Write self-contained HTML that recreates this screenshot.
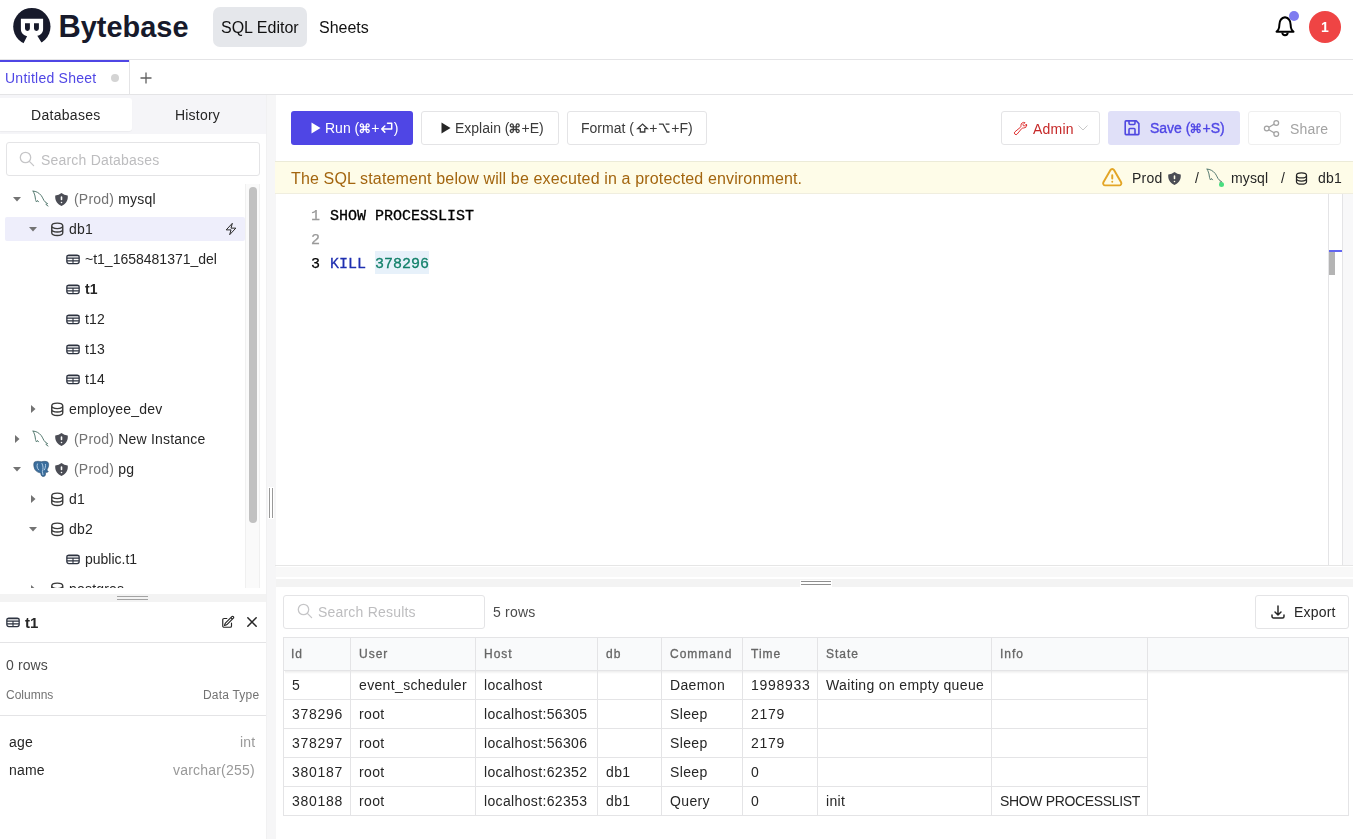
<!DOCTYPE html>
<html><head><meta charset="utf-8">
<style>
*{box-sizing:border-box;margin:0;padding:0}
html,body{width:1353px;height:839px;overflow:hidden;background:#fff;font-family:"Liberation Sans",sans-serif;color:#111827}
.a{position:absolute}
.t{position:absolute;white-space:nowrap;line-height:1;will-change:transform}
svg{position:absolute;overflow:visible}
svg.g{position:static;display:inline-block;vertical-align:baseline}
</style></head><body>
<div class="a" style="left:0px;top:59px;width:1353px;height:1px;background:#e4e4e6"></div>
<svg style="left:0;top:0" width="60" height="50" viewBox="0 0 60 50"><circle cx="31.85" cy="26.6" r="18.65" fill="#171a2b"/><path d="M20.9 18.8 H43.1 V29.2 C43.1 32.4 40.8 35 37.3 35.7 L44.2 47 H21.6 L27.1 36.2 C23.4 35.3 20.9 32.6 20.9 29.2 Z" fill="#fff"/><path d="M25 23.2 H29.9 V28.45 A2.45 2.45 0 0 1 25 28.45 Z M34 23.2 H38.9 V28.45 A2.45 2.45 0 0 1 34 28.45 Z" fill="#171a2b"/></svg>
<svg style="left:58px;top:8px" width="132" height="38" viewBox="0 0 132 38"><text x="0.5" y="28.5" font-family="Liberation Sans" font-weight="bold" font-size="30" fill="#171a2b" textLength="130" lengthAdjust="spacingAndGlyphs"><tspan font-size="32">B</tspan>ytebase</text></svg>
<div class="a" style="left:213px;top:7px;width:94px;height:40px;background:#e5e7eb;border-radius:7px"></div>
<div class="t" style="top:20.06px;font-size:16px;color:#111;left:221px;">SQL Editor</div>
<div class="t" style="top:20.06px;font-size:16px;color:#111;left:319px;">Sheets</div>
<svg style="left:1270px;top:10px;" width="30" height="30" viewBox="0 0 30 30"><path d="M15 7.2 C12.3 7.6 9.6 10 9.4 14.5 L9.1 17.5 C8.9 19.5 7.9 20.5 6.5 21.7 H23.5 C22.1 20.5 21.1 19.5 20.9 17.5 L20.6 14.5 C20.4 10 17.7 7.6 15 7.2 Z" fill="none" stroke="#000" stroke-width="2" stroke-linejoin="round"/><path d="M12.3 22.6 A2.7 2.7 0 0 0 17.7 22.6" fill="none" stroke="#000" stroke-width="2"/></svg>
<div class="a" style="left:1289px;top:11px;width:10px;height:10px;background:#7f7cf0;border-radius:50%"></div>
<div class="a" style="left:1309px;top:11px;width:32px;height:32px;background:#ef4444;border-radius:50%"></div>
<div class="t" style="top:20.15px;font-size:14px;color:#fff;left:1325px;font-weight:bold;transform:translateX(-50%)">1</div>
<div class="a" style="left:0px;top:94px;width:1353px;height:1px;background:#e4e4e6"></div>
<div class="a" style="left:0px;top:60px;width:129px;height:2px;background:#4f46e5"></div>
<div class="a" style="left:129px;top:60px;width:1px;height:34px;background:#e4e4e6"></div>
<div class="t" style="top:71.05px;font-size:14px;color:#4f46e5;left:5px;letter-spacing:.25px">Untitled Sheet</div>
<div class="a" style="left:111px;top:74px;width:8px;height:8px;background:#d4d4d4;border-radius:50%"></div>
<svg style="left:140px;top:71.5px;" width="12" height="12" viewBox="0 0 12 12"><path d="M6 0.5V11.5M0.5 6H11.5" stroke="#606060" stroke-width="1.3"/></svg>
<div class="a" style="left:0px;top:95px;width:266px;height:39px;background:#f5f5f8"></div>
<div class="a" style="left:0px;top:98px;width:132px;height:33px;background:#fff;border-radius:0 3px 3px 0;box-shadow:0 1px 1px rgba(0,0,0,.04)"></div>
<div class="t" style="top:108.15px;font-size:14px;color:#262626;left:31px;letter-spacing:.3px">Databases</div>
<div class="t" style="top:108.15px;font-size:14px;color:#262626;left:175px;letter-spacing:.2px">History</div>
<div class="a" style="left:6px;top:142px;width:254px;height:34px;border:1px solid #e4e4e6;border-radius:3px"></div>
<svg style="left:19px;top:151px;" width="16" height="16" viewBox="0 0 16 16"><circle cx="6.5" cy="6.5" r="5.2" fill="none" stroke="#c6c6c8" stroke-width="1.3"/><path d="M10.4 10.4L14.6 14.6" stroke="#c6c6c8" stroke-width="1.3" stroke-linecap="round"/></svg>
<div class="t" style="top:153.15px;font-size:14px;color:#bdbdbf;left:41px;letter-spacing:.2px">Search Databases</div>
<div class="a" style="left:5px;top:217px;width:240px;height:24px;background:#eeeefb;border-radius:2px"></div>
<svg style="left:13px;top:197px;" width="8" height="5" viewBox="0 0 8 5"><path d="M0 0H8L4 4.5Z" fill="#737373"/></svg>
<svg style="left:33px;top:191px;" width="16" height="16" viewBox="0 0 16 16"><path d="M0.1 0.1 C3 0.1 6 1.8 8.2 4.5 C9.7 6.5 10.6 9.4 12 10.8 C12.9 11.6 14 12 14.6 12.6 L12.8 13.3 L15 15" fill="none" stroke="#557a70" stroke-width="1" stroke-linecap="round" stroke-linejoin="round"/><path d="M0.1 0.1 C1 2 2 4 2.3 7 C2.5 9 3 10 3.5 11 L4.5 9.5 L5.5 10.8" fill="none" stroke="#557a70" stroke-width="1" stroke-linecap="round" stroke-linejoin="round"/></svg>
<svg style="left:55px;top:192.5px;" width="13" height="13" viewBox="2 1.9 16 16.5"><path fill-rule="evenodd" d="M10 1.944A11.954 11.954 0 012.166 5C2.056 5.649 2 6.319 2 7c0 5.225 3.34 9.67 8 11.317C14.66 16.67 18 12.225 18 7c0-.682-.057-1.35-.166-2.001A11.954 11.954 0 0110 1.944zM11 14a1 1 0 11-2 0 1 1 0 012 0zm0-7a1 1 0 10-2 0v3a1 1 0 102 0V7z" fill="#4b4d55"/></svg>
<div class="t" style="top:191.75px;font-size:14px;color:#262626;left:74px;letter-spacing:.2px"><span style="color:#737373">(Prod)</span> mysql</div>
<svg style="left:29px;top:227px;" width="8" height="5" viewBox="0 0 8 5"><path d="M0 0H8L4 4.5Z" fill="#737373"/></svg>
<svg style="left:48.9px;top:220.75px;" width="16.5" height="16.5" viewBox="0 0 24 24"><path d="M4 7v10c0 2.21 3.582 4 8 4s8-1.79 8-4V7M4 7c0 2.21 3.582 4 8 4s8-1.79 8-4M4 7c0-2.21 3.582-4 8-4s8 1.79 8 4m0 5c0 2.21-3.582 4-8 4s-8-1.79-8-4" fill="none" stroke="#3a3a3a" stroke-width="2" stroke-linecap="round" stroke-linejoin="round"/></svg>
<div class="t" style="top:221.75px;font-size:14px;color:#262626;left:69px;letter-spacing:.2px">db1</div>
<svg style="left:66px;top:253.5px;" width="14" height="11" viewBox="0 0 14 11"><rect x="0.85" y="1.05" width="12.3" height="8.5" rx="2" fill="none" stroke="#2d3340" stroke-width="1.3"/><path d="M0.85 1.6H13.15M0.85 4.1H13.15M0.85 6.85H13.15M7 4.1V9.5" stroke="#2d3340" stroke-width="1.1"/></svg>
<div class="t" style="top:251.75px;font-size:14px;color:#262626;left:85.3px;letter-spacing:0px">~t1_1658481371_del</div>
<svg style="left:66px;top:283.5px;" width="14" height="11" viewBox="0 0 14 11"><rect x="0.85" y="1.05" width="12.3" height="8.5" rx="2" fill="none" stroke="#2d3340" stroke-width="1.3"/><path d="M0.85 1.6H13.15M0.85 4.1H13.15M0.85 6.85H13.15M7 4.1V9.5" stroke="#2d3340" stroke-width="1.1"/></svg>
<div class="t" style="top:281.75px;font-size:14px;color:#262626;left:85.3px;font-weight:bold;letter-spacing:.2px">t1</div>
<svg style="left:66px;top:313.5px;" width="14" height="11" viewBox="0 0 14 11"><rect x="0.85" y="1.05" width="12.3" height="8.5" rx="2" fill="none" stroke="#2d3340" stroke-width="1.3"/><path d="M0.85 1.6H13.15M0.85 4.1H13.15M0.85 6.85H13.15M7 4.1V9.5" stroke="#2d3340" stroke-width="1.1"/></svg>
<div class="t" style="top:311.75px;font-size:14px;color:#262626;left:85.3px;letter-spacing:.2px">t12</div>
<svg style="left:66px;top:343.5px;" width="14" height="11" viewBox="0 0 14 11"><rect x="0.85" y="1.05" width="12.3" height="8.5" rx="2" fill="none" stroke="#2d3340" stroke-width="1.3"/><path d="M0.85 1.6H13.15M0.85 4.1H13.15M0.85 6.85H13.15M7 4.1V9.5" stroke="#2d3340" stroke-width="1.1"/></svg>
<div class="t" style="top:341.75px;font-size:14px;color:#262626;left:85.3px;letter-spacing:.2px">t13</div>
<svg style="left:66px;top:373.5px;" width="14" height="11" viewBox="0 0 14 11"><rect x="0.85" y="1.05" width="12.3" height="8.5" rx="2" fill="none" stroke="#2d3340" stroke-width="1.3"/><path d="M0.85 1.6H13.15M0.85 4.1H13.15M0.85 6.85H13.15M7 4.1V9.5" stroke="#2d3340" stroke-width="1.1"/></svg>
<div class="t" style="top:371.75px;font-size:14px;color:#262626;left:85.3px;letter-spacing:.2px">t14</div>
<svg style="left:31px;top:405px;" width="5" height="8" viewBox="0 0 5 8"><path d="M0 0V8L4.5 4Z" fill="#737373"/></svg>
<svg style="left:48.9px;top:400.75px;" width="16.5" height="16.5" viewBox="0 0 24 24"><path d="M4 7v10c0 2.21 3.582 4 8 4s8-1.79 8-4V7M4 7c0 2.21 3.582 4 8 4s8-1.79 8-4M4 7c0-2.21 3.582-4 8-4s8 1.79 8 4m0 5c0 2.21-3.582 4-8 4s-8-1.79-8-4" fill="none" stroke="#3a3a3a" stroke-width="2" stroke-linecap="round" stroke-linejoin="round"/></svg>
<div class="t" style="top:401.75px;font-size:14px;color:#262626;left:69px;letter-spacing:.2px">employee_dev</div>
<svg style="left:15px;top:435px;" width="5" height="8" viewBox="0 0 5 8"><path d="M0 0V8L4.5 4Z" fill="#737373"/></svg>
<svg style="left:33px;top:431px;" width="16" height="16" viewBox="0 0 16 16"><path d="M0.1 0.1 C3 0.1 6 1.8 8.2 4.5 C9.7 6.5 10.6 9.4 12 10.8 C12.9 11.6 14 12 14.6 12.6 L12.8 13.3 L15 15" fill="none" stroke="#557a70" stroke-width="1" stroke-linecap="round" stroke-linejoin="round"/><path d="M0.1 0.1 C1 2 2 4 2.3 7 C2.5 9 3 10 3.5 11 L4.5 9.5 L5.5 10.8" fill="none" stroke="#557a70" stroke-width="1" stroke-linecap="round" stroke-linejoin="round"/></svg>
<svg style="left:55px;top:432.5px;" width="13" height="13" viewBox="2 1.9 16 16.5"><path fill-rule="evenodd" d="M10 1.944A11.954 11.954 0 012.166 5C2.056 5.649 2 6.319 2 7c0 5.225 3.34 9.67 8 11.317C14.66 16.67 18 12.225 18 7c0-.682-.057-1.35-.166-2.001A11.954 11.954 0 0110 1.944zM11 14a1 1 0 11-2 0 1 1 0 012 0zm0-7a1 1 0 10-2 0v3a1 1 0 102 0V7z" fill="#4b4d55"/></svg>
<div class="t" style="top:431.75px;font-size:14px;color:#262626;left:74px;letter-spacing:.2px"><span style="color:#737373">(Prod)</span> New Instance</div>
<svg style="left:13px;top:467px;" width="8" height="5" viewBox="0 0 8 5"><path d="M0 0H8L4 4.5Z" fill="#737373"/></svg>
<svg style="left:33px;top:461px;" width="16" height="16" viewBox="0 0 16 16"><path d="M1.6 0.9 C4 0 6.5 0.3 8.2 0.8 C10.2 0.2 13.6 0 15.1 1.4 C16.2 2.7 15.7 5.6 14.4 8.1 C13.9 9.1 13.9 9.9 15.3 10.4 C14.8 11.4 13.4 11.7 12.7 11 L12.4 14 C12.2 15.3 10.5 15.8 9.2 15.3 C8.1 14.8 7.8 13.2 7.8 11.9 C5.6 11.7 3.2 10.6 2 8.6 C0.7 6.1 0.2 2.2 1.6 0.9 Z" fill="#3a6d9c" stroke="#2f4f6f" stroke-width="0.6"/><path d="M4.6 2.6 C3.6 4.8 4 7.4 6 9.2 M8.8 2.2 C10.2 4.5 10.4 7.8 9.4 10.6 L10 14 M12.4 3 C12.8 5.2 12.2 7.4 11.2 9.2" fill="none" stroke="#bcd6ec" stroke-width="0.9"/></svg>
<svg style="left:55px;top:462.5px;" width="13" height="13" viewBox="2 1.9 16 16.5"><path fill-rule="evenodd" d="M10 1.944A11.954 11.954 0 012.166 5C2.056 5.649 2 6.319 2 7c0 5.225 3.34 9.67 8 11.317C14.66 16.67 18 12.225 18 7c0-.682-.057-1.35-.166-2.001A11.954 11.954 0 0110 1.944zM11 14a1 1 0 11-2 0 1 1 0 012 0zm0-7a1 1 0 10-2 0v3a1 1 0 102 0V7z" fill="#4b4d55"/></svg>
<div class="t" style="top:461.75px;font-size:14px;color:#262626;left:74px;letter-spacing:.2px"><span style="color:#737373">(Prod)</span> pg</div>
<svg style="left:31px;top:495px;" width="5" height="8" viewBox="0 0 5 8"><path d="M0 0V8L4.5 4Z" fill="#737373"/></svg>
<svg style="left:48.9px;top:490.75px;" width="16.5" height="16.5" viewBox="0 0 24 24"><path d="M4 7v10c0 2.21 3.582 4 8 4s8-1.79 8-4V7M4 7c0 2.21 3.582 4 8 4s8-1.79 8-4M4 7c0-2.21 3.582-4 8-4s8 1.79 8 4m0 5c0 2.21-3.582 4-8 4s-8-1.79-8-4" fill="none" stroke="#3a3a3a" stroke-width="2" stroke-linecap="round" stroke-linejoin="round"/></svg>
<div class="t" style="top:491.75px;font-size:14px;color:#262626;left:69px;letter-spacing:.2px">d1</div>
<svg style="left:29px;top:527px;" width="8" height="5" viewBox="0 0 8 5"><path d="M0 0H8L4 4.5Z" fill="#737373"/></svg>
<svg style="left:48.9px;top:520.75px;" width="16.5" height="16.5" viewBox="0 0 24 24"><path d="M4 7v10c0 2.21 3.582 4 8 4s8-1.79 8-4V7M4 7c0 2.21 3.582 4 8 4s8-1.79 8-4M4 7c0-2.21 3.582-4 8-4s8 1.79 8 4m0 5c0 2.21-3.582 4-8 4s-8-1.79-8-4" fill="none" stroke="#3a3a3a" stroke-width="2" stroke-linecap="round" stroke-linejoin="round"/></svg>
<div class="t" style="top:521.75px;font-size:14px;color:#262626;left:69px;letter-spacing:.2px">db2</div>
<svg style="left:66px;top:553.5px;" width="14" height="11" viewBox="0 0 14 11"><rect x="0.85" y="1.05" width="12.3" height="8.5" rx="2" fill="none" stroke="#2d3340" stroke-width="1.3"/><path d="M0.85 1.6H13.15M0.85 4.1H13.15M0.85 6.85H13.15M7 4.1V9.5" stroke="#2d3340" stroke-width="1.1"/></svg>
<div class="t" style="top:551.75px;font-size:14px;color:#262626;left:85.3px;letter-spacing:0px">public.t1</div>
<svg style="left:31px;top:585px;" width="5" height="8" viewBox="0 0 5 8"><path d="M0 0V8L4.5 4Z" fill="#737373"/></svg>
<svg style="left:48.9px;top:580.75px;" width="16.5" height="16.5" viewBox="0 0 24 24"><path d="M4 7v10c0 2.21 3.582 4 8 4s8-1.79 8-4V7M4 7c0 2.21 3.582 4 8 4s8-1.79 8-4M4 7c0-2.21 3.582-4 8-4s8 1.79 8 4m0 5c0 2.21-3.582 4-8 4s-8-1.79-8-4" fill="none" stroke="#3a3a3a" stroke-width="2" stroke-linecap="round" stroke-linejoin="round"/></svg>
<div class="t" style="top:581.75px;font-size:14px;color:#262626;left:69px;letter-spacing:.2px">postgres</div>
<svg style="left:224px;top:222px;" width="14" height="14" viewBox="0 0 24 24"><path d="M3.75 13.5l10.5-11.25L12 10.5h8.25L9.75 21.75 12 13.5H3.75z" fill="none" stroke="#262626" stroke-width="1.7" stroke-linejoin="round"/></svg>
<div class="a" style="left:245px;top:184px;width:15px;height:406px;border-left:1px solid #f0f0f0;border-right:1px solid #f0f0f0;background:#fafafa"></div>
<div class="a" style="left:249px;top:187px;width:8px;height:336px;background:#c1c1c1;border-radius:4px"></div>
<div class="a" style="left:0px;top:588px;width:267px;height:251px;background:#fff"></div>
<div class="a" style="left:0px;top:594px;width:266px;height:8px;background:#f3f3f3"></div>
<div class="a" style="left:117px;top:596px;width:31px;height:1px;background:#a3a3a3"></div>
<div class="a" style="left:117px;top:599px;width:31px;height:1px;background:#a3a3a3"></div>
<div class="a" style="left:0px;top:642px;width:267px;height:1px;background:#e4e4e6"></div>
<svg style="left:6px;top:616.5px;" width="14" height="11" viewBox="0 0 14 11"><rect x="0.85" y="1.05" width="12.3" height="8.5" rx="2" fill="none" stroke="#2d3340" stroke-width="1.3"/><path d="M0.85 1.6H13.15M0.85 4.1H13.15M0.85 6.85H13.15M7 4.1V9.5" stroke="#2d3340" stroke-width="1.1"/></svg>
<div class="t" style="top:614.90px;font-size:15px;color:#262626;left:25px;font-weight:bold;">t1</div>
<svg style="left:221px;top:615px;" width="14" height="14" viewBox="0 0 24 24"><path d="M16.862 4.487l1.687-1.688a1.875 1.875 0 112.652 2.652L10.582 16.07a4.5 4.5 0 01-1.897 1.13L6 18l.8-2.685a4.5 4.5 0 011.13-1.897l8.932-8.931zm0 0L19.5 7.125M18 14v4.75A2.25 2.25 0 0115.75 21H5.25A2.25 2.25 0 013 18.75V8.25A2.25 2.25 0 015.25 6H10" fill="none" stroke="#262626" stroke-width="2" stroke-linecap="round" stroke-linejoin="round"/></svg>
<svg style="left:247px;top:617px;" width="10" height="10" viewBox="0 0 10 10"><path d="M0.8 0.8L9.2 9.2M9.2 0.8L0.8 9.2" stroke="#262626" stroke-width="1.5" stroke-linecap="round"/></svg>
<div class="t" style="top:657.95px;font-size:14px;color:#4b4b4b;left:6px;letter-spacing:.1px">0 rows</div>
<div class="t" style="top:689.04px;font-size:12px;color:#737373;left:6px;">Columns</div>
<div class="t" style="top:689.04px;font-size:12px;color:#737373;right:1094px;letter-spacing:.2px">Data Type</div>
<div class="a" style="left:0px;top:715px;width:267px;height:1px;background:#e4e4e6"></div>
<div class="t" style="top:734.95px;font-size:14px;color:#262626;left:9px;letter-spacing:.2px">age</div>
<div class="t" style="top:734.95px;font-size:14px;color:#999999;right:1098px;letter-spacing:.2px">int</div>
<div class="t" style="top:762.85px;font-size:14px;color:#262626;left:9px;letter-spacing:.2px">name</div>
<div class="t" style="top:762.85px;font-size:14px;color:#999999;right:1098px;letter-spacing:.2px">varchar(255)</div>
<div class="a" style="left:266px;top:95px;width:1px;height:744px;background:#f1f1f2"></div>
<div class="a" style="left:267px;top:95px;width:9px;height:744px;background:#f6f6f7"></div>
<div class="a" style="left:268px;top:487px;width:6px;height:32px;background:#fff"></div>
<div class="a" style="left:269px;top:488px;width:1px;height:30px;background:#999"></div>
<div class="a" style="left:272px;top:488px;width:1px;height:30px;background:#999"></div>
<div class="a" style="left:291px;top:111px;width:122px;height:34px;background:#4f46e5;border-radius:3px"></div>
<svg style="left:311px;top:122px;" width="10" height="12" viewBox="0 0 10 12"><path d="M0.5 0.5L9.5 6L0.5 11.5Z" fill="#fff"/></svg>
<div class="t" style="top:120.95px;font-size:14px;color:#fff;left:325px;">Run (<svg class="g" width="12" height="11" viewBox="0 0 12 11"><path d="M4.3 4.9 H7.2 V7.5 H4.3 Z M4.3 4.9 V3.4 A1.5 1.5 0 1 0 2.8 4.9 H4.3 M7.2 4.9 V3.4 A1.5 1.5 0 1 1 8.7 4.9 H7.2 M4.3 7.5 V9 A1.5 1.5 0 1 1 2.8 7.5 H4.3 M7.2 7.5 V9 A1.5 1.5 0 1 0 8.7 7.5 H7.2" fill="none" stroke="#fff" stroke-width="1.3"/></svg>+<svg class="g" width="14.4" height="11" viewBox="0 0 14.4 11"><path d="M8.5 1.2 H12.7 V7 H2.7 M5.8 4 L2.7 7 L5.8 10.1" fill="none" stroke="#fff" stroke-width="1.5" stroke-linejoin="round" stroke-linecap="round"/></svg>)</div>
<div class="a" style="left:421px;top:111px;width:138px;height:34px;border:1px solid #e4e4e6;border-radius:3px"></div>
<svg style="left:441px;top:122px;" width="10" height="12" viewBox="0 0 10 12"><path d="M0.5 0.5L9.5 6L0.5 11.5Z" fill="#262626"/></svg>
<div class="t" style="top:120.95px;font-size:14px;color:#3a3a3a;left:455px;">Explain (<svg class="g" width="12" height="11" viewBox="0 0 12 11"><path d="M4.3 4.9 H7.2 V7.5 H4.3 Z M4.3 4.9 V3.4 A1.5 1.5 0 1 0 2.8 4.9 H4.3 M7.2 4.9 V3.4 A1.5 1.5 0 1 1 8.7 4.9 H7.2 M4.3 7.5 V9 A1.5 1.5 0 1 1 2.8 7.5 H4.3 M7.2 7.5 V9 A1.5 1.5 0 1 0 8.7 7.5 H7.2" fill="none" stroke="#3a3a3a" stroke-width="1.3"/></svg>+E)</div>
<div class="a" style="left:567px;top:111px;width:140px;height:34px;border:1px solid #e4e4e6;border-radius:3px"></div>
<div class="t" style="top:120.95px;font-size:14px;color:#3a3a3a;left:581px;">Format (<svg class="g" width="15.4" height="11" viewBox="0 0 15.4 11"><path d="M8.55 2.1 L3.7 6.6 H6.3 V10 H10.8 V6.6 H13.4 Z" fill="none" stroke="#3a3a3a" stroke-width="1.3" stroke-linejoin="miter"/></svg>+<svg class="g" width="13.8" height="11" viewBox="0 0 13.8 11"><path d="M1.9 2.1 H6 L10.1 10 H12.5 M8.6 2.1 H12.5" fill="none" stroke="#3a3a3a" stroke-width="1.3"/></svg>+F)</div>
<div class="a" style="left:1001px;top:111px;width:99px;height:34px;border:1px solid #e4e4e6;border-radius:3px"></div>
<svg style="left:1013px;top:121px;" width="15" height="15" viewBox="0 0 24 24"><path d="M21.75 6.75a4.5 4.5 0 01-4.884 4.484c-1.076-.091-2.264.071-2.95.904l-7.152 8.684a2.548 2.548 0 11-3.586-3.586l8.684-7.152c.833-.686.995-1.874.904-2.95a4.5 4.5 0 016.336-4.486l-3.276 3.276a3.004 3.004 0 002.25 2.25l3.276-3.276c.256.565.398 1.192.398 1.852z" fill="none" stroke="#dc2626" stroke-width="1.5" stroke-linecap="round" stroke-linejoin="round"/></svg>
<div class="t" style="top:122.15px;font-size:14px;color:#c62828;left:1033px;letter-spacing:.2px">Admin</div>
<svg style="left:1078px;top:125px;" width="10" height="6" viewBox="0 0 10 6"><path d="M0.5 0.5L5 5L9.5 0.5" fill="none" stroke="#c8c8c8" stroke-width="1"/></svg>
<div class="a" style="left:1108px;top:111px;width:132px;height:34px;background:#e0e0f8;border-radius:3px"></div>
<svg style="left:1118px;top:115px;" width="28" height="26" viewBox="0 0 28 26"><path d="M8 5.9 H18.3 L20.9 8.6 V18.8 Q20.9 19.6 20.1 19.6 H8 Q7.2 19.6 7.2 18.8 V6.7 Q7.2 5.9 8 5.9 Z M11 5.9 V8.3 C11 9 11.5 9.5 12.2 9.5 H15.8 C16.5 9.5 17 9 17 8.3 V5.9 M11 19.6 V14.4 C11 13.9 11.4 13.5 11.9 13.5 H16.1 C16.6 13.5 17 13.9 17 14.4 V19.6" fill="none" stroke="#5048e0" stroke-width="1.6" stroke-linejoin="round"/></svg>
<div class="t" style="top:121.05px;font-size:14px;color:#4f46e5;left:1149.5px;-webkit-text-stroke:.35px #4f46e5">Save (<svg class="g" width="12" height="11" viewBox="0 0 12 11"><path d="M4.3 4.9 H7.2 V7.5 H4.3 Z M4.3 4.9 V3.4 A1.5 1.5 0 1 0 2.8 4.9 H4.3 M7.2 4.9 V3.4 A1.5 1.5 0 1 1 8.7 4.9 H7.2 M4.3 7.5 V9 A1.5 1.5 0 1 1 2.8 7.5 H4.3 M7.2 7.5 V9 A1.5 1.5 0 1 0 8.7 7.5 H7.2" fill="none" stroke="#4f46e5" stroke-width="1.3"/></svg>+S)</div>
<div class="a" style="left:1248px;top:111px;width:93px;height:34px;border:1px solid #efefef;border-radius:3px"></div>
<svg style="left:1262px;top:119px;fill:none;stroke:#a3a3a3;stroke-width:1.6" width="19" height="19" viewBox="0 0 24 24"><circle cx="6" cy="12" r="3"/><circle cx="18" cy="5" r="3"/><circle cx="18" cy="19" r="3"/><path d="M8.6 10.5l6.8-4M8.6 13.5l6.8 4"/></svg>
<div class="t" style="top:122.15px;font-size:14px;color:#a3a3a3;left:1290px;letter-spacing:.2px">Share</div>
<div class="a" style="left:275px;top:161px;width:1078px;height:33px;background:#fefce8;border-top:1px solid #ecebd8"></div>
<div class="t" style="top:170.86px;font-size:16px;color:#a3650f;left:291px;letter-spacing:.15px">The SQL statement below will be executed in a protected environment.</div>
<div class="a" style="left:275px;top:193px;width:1078px;height:1px;background:#f0eedf"></div>
<svg style="left:1099.8px;top:166.2px;" width="24.5" height="24.5" viewBox="0 0 24 24"><path d="M12 9v3.2m0 3.3h.01m-6.938 3.5h13.856c1.54 0 2.502-1.667 1.732-3L13.732 4c-.77-1.333-2.694-1.333-3.464 0L3.34 16c-.77 1.333.192 3 1.732 3z" fill="none" stroke="#e3a526" stroke-width="1.9" stroke-linecap="round" stroke-linejoin="round"/></svg>
<div class="t" style="top:171.35px;font-size:14px;color:#262626;left:1132px;letter-spacing:.2px">Prod</div>
<svg style="left:1168px;top:172.0px;" width="13" height="13" viewBox="2 1.9 16 16.5"><path fill-rule="evenodd" d="M10 1.944A11.954 11.954 0 012.166 5C2.056 5.649 2 6.319 2 7c0 5.225 3.34 9.67 8 11.317C14.66 16.67 18 12.225 18 7c0-.682-.057-1.35-.166-2.001A11.954 11.954 0 0110 1.944zM11 14a1 1 0 11-2 0 1 1 0 012 0zm0-7a1 1 0 10-2 0v3a1 1 0 102 0V7z" fill="#4b4d55"/></svg>
<div class="t" style="top:171.35px;font-size:14px;color:#262626;left:1195px;">/</div>
<svg style="left:1207px;top:169px;" width="16" height="16" viewBox="0 0 16 16"><path d="M0.1 0.1 C3 0.1 6 1.8 8.2 4.5 C9.7 6.5 10.6 9.4 12 10.8 C12.9 11.6 14 12 14.6 12.6 L12.8 13.3 L15 15" fill="none" stroke="#557a70" stroke-width="1" stroke-linecap="round" stroke-linejoin="round"/><path d="M0.1 0.1 C1 2 2 4 2.3 7 C2.5 9 3 10 3.5 11 L4.5 9.5 L5.5 10.8" fill="none" stroke="#557a70" stroke-width="1" stroke-linecap="round" stroke-linejoin="round"/></svg>
<div class="a" style="left:1219px;top:182px;width:5px;height:5px;background:#4ade80;border-radius:50%"></div>
<div class="t" style="top:171.35px;font-size:14px;color:#262626;left:1231px;letter-spacing:.15px">mysql</div>
<div class="t" style="top:171.35px;font-size:14px;color:#262626;left:1281px;">/</div>
<svg style="left:1294px;top:171.2px;" width="15" height="15" viewBox="0 0 24 24"><path d="M4 7v10c0 2.21 3.582 4 8 4s8-1.79 8-4V7M4 7c0 2.21 3.582 4 8 4s8-1.79 8-4M4 7c0-2.21 3.582-4 8-4s8 1.79 8 4m0 5c0 2.21-3.582 4-8 4s-8-1.79-8-4" fill="none" stroke="#262626" stroke-width="2" stroke-linecap="round" stroke-linejoin="round"/></svg>
<div class="t" style="top:171.35px;font-size:14px;color:#262626;left:1318px;letter-spacing:.2px">db1</div>
<div class="t" style="top:208.50px;font-size:15px;color:#999;left:311px;font-family:'Liberation Mono',monospace;-webkit-text-stroke:.25px #999">1</div>
<div class="t" style="top:232.50px;font-size:15px;color:#999;left:311px;font-family:'Liberation Mono',monospace;-webkit-text-stroke:.25px #999">2</div>
<div class="t" style="top:256.50px;font-size:15px;color:#000;left:311px;font-family:'Liberation Mono',monospace;-webkit-text-stroke:.25px #000">3</div>
<div class="t" style="top:208.50px;font-size:15px;color:#000;left:330px;font-family:'Liberation Mono',monospace;-webkit-text-stroke:.3px #000">SHOW PROCESSLIST</div>
<div class="a" style="left:375px;top:251px;width:54px;height:23px;background:#e7f1fa"></div>
<div class="t" style="top:256.50px;font-size:15px;color:#1f2fb0;left:330px;font-family:'Liberation Mono',monospace;"><span style="-webkit-text-stroke:.3px #1f2fb0">KILL</span> <span style="color:#13806a;-webkit-text-stroke:.3px #13806a">378296</span></div>
<div class="a" style="left:1328px;top:194px;width:1px;height:372px;background:#e4e4e6"></div>
<div class="a" style="left:1342px;top:194px;width:1px;height:372px;background:#e4e4e6"></div>
<div class="a" style="left:1343px;top:194px;width:10px;height:372px;background:#f8f8f9"></div>
<div class="a" style="left:1329px;top:250px;width:13px;height:2px;background:#6366f1"></div>
<div class="a" style="left:1329px;top:252px;width:6px;height:23px;background:#b4b4b4"></div>
<div class="a" style="left:275px;top:565px;width:1078px;height:1px;background:#e6e6e6"></div>
<div class="a" style="left:276px;top:567px;width:1077px;height:10px;background:#f8f8f8"></div>
<div class="a" style="left:276px;top:579px;width:1077px;height:8px;background:#f3f3f3"></div>
<div class="a" style="left:800px;top:580px;width:32px;height:7px;background:#fff"></div>
<div class="a" style="left:801px;top:581px;width:30px;height:1px;background:#8f8f8f"></div>
<div class="a" style="left:801px;top:584px;width:30px;height:1px;background:#8f8f8f"></div>
<div class="a" style="left:283px;top:595px;width:202px;height:34px;border:1px solid #e4e4e6;border-radius:3px"></div>
<svg style="left:297px;top:603px;" width="16" height="16" viewBox="0 0 16 16"><circle cx="6.5" cy="6.5" r="5.2" fill="none" stroke="#c6c6c8" stroke-width="1.3"/><path d="M10.4 10.4L14.6 14.6" stroke="#c6c6c8" stroke-width="1.3" stroke-linecap="round"/></svg>
<div class="t" style="top:605.15px;font-size:14px;color:#bdbdbf;left:318px;letter-spacing:.2px">Search Results</div>
<div class="t" style="top:605.15px;font-size:14px;color:#4b4b4b;left:493px;letter-spacing:.2px">5 rows</div>
<div class="a" style="left:1255px;top:595px;width:94px;height:34px;border:1px solid #e4e4e6;border-radius:3px"></div>
<svg style="left:1270px;top:604px;" width="16" height="16" viewBox="0 0 24 24"><path d="M3 16.5v2.25A2.25 2.25 0 005.25 21h13.5A2.25 2.25 0 0021 18.75V16.5M16.5 12L12 16.5m0 0L7.5 12m4.5 4.5V3" fill="none" stroke="#262626" stroke-width="2.2" stroke-linecap="round" stroke-linejoin="round"/></svg>
<div class="t" style="top:605.15px;font-size:14px;color:#262626;left:1293.5px;letter-spacing:.2px">Export</div>
<div class="a" style="left:283px;top:637px;width:1066px;height:34px;background:#f9fafb"></div>
<div class="a" style="left:283px;top:637px;width:1066px;height:1px;background:#e4e4e6"></div>
<div class="a" style="left:283px;top:670px;width:1066px;height:1px;background:#e4e4e6"></div>
<div class="a" style="left:285px;top:671px;width:1063px;height:3px;background:linear-gradient(#ededed,rgba(255,255,255,0))"></div>
<div class="a" style="left:283px;top:637px;width:1px;height:179px;background:#e4e4e6"></div>
<div class="a" style="left:1348px;top:637px;width:1px;height:179px;background:#e4e4e6"></div>
<div class="a" style="left:350px;top:637px;width:1px;height:179px;background:#e4e4e6"></div>
<div class="a" style="left:475px;top:637px;width:1px;height:179px;background:#e4e4e6"></div>
<div class="a" style="left:597px;top:637px;width:1px;height:179px;background:#e4e4e6"></div>
<div class="a" style="left:661px;top:637px;width:1px;height:179px;background:#e4e4e6"></div>
<div class="a" style="left:742px;top:637px;width:1px;height:179px;background:#e4e4e6"></div>
<div class="a" style="left:817px;top:637px;width:1px;height:179px;background:#e4e4e6"></div>
<div class="a" style="left:991px;top:637px;width:1px;height:179px;background:#e4e4e6"></div>
<div class="a" style="left:1147px;top:637px;width:1px;height:179px;background:#e4e4e6"></div>
<div class="a" style="left:283px;top:699px;width:864px;height:1px;background:#e4e4e6"></div>
<div class="a" style="left:283px;top:728px;width:864px;height:1px;background:#e4e4e6"></div>
<div class="a" style="left:283px;top:757px;width:864px;height:1px;background:#e4e4e6"></div>
<div class="a" style="left:283px;top:786px;width:864px;height:1px;background:#e4e4e6"></div>
<div class="a" style="left:283px;top:815px;width:864px;height:1px;background:#e4e4e6"></div>
<div class="a" style="left:283px;top:815px;width:1066px;height:1px;background:#e4e4e6"></div>
<div class="t" style="top:647.84px;font-size:12px;color:#666666;left:291px;letter-spacing:1px;-webkit-text-stroke:.3px #666666">Id</div>
<div class="t" style="top:647.84px;font-size:12px;color:#666666;left:359px;letter-spacing:1px;-webkit-text-stroke:.3px #666666">User</div>
<div class="t" style="top:647.84px;font-size:12px;color:#666666;left:484px;letter-spacing:1px;-webkit-text-stroke:.3px #666666">Host</div>
<div class="t" style="top:647.84px;font-size:12px;color:#666666;left:606px;letter-spacing:1px;-webkit-text-stroke:.3px #666666">db</div>
<div class="t" style="top:647.84px;font-size:12px;color:#666666;left:670px;letter-spacing:1px;-webkit-text-stroke:.3px #666666">Command</div>
<div class="t" style="top:647.84px;font-size:12px;color:#666666;left:751px;letter-spacing:1px;-webkit-text-stroke:.3px #666666">Time</div>
<div class="t" style="top:647.84px;font-size:12px;color:#666666;left:826px;letter-spacing:1px;-webkit-text-stroke:.3px #666666">State</div>
<div class="t" style="top:647.84px;font-size:12px;color:#666666;left:1000px;letter-spacing:1px;-webkit-text-stroke:.3px #666666">Info</div>
<div class="t" style="top:677.55px;font-size:14px;color:#262626;left:292px;letter-spacing:0.7px">5</div>
<div class="t" style="top:677.55px;font-size:14px;color:#262626;left:359px;letter-spacing:0.35px">event_scheduler</div>
<div class="t" style="top:677.55px;font-size:14px;color:#262626;left:484px;letter-spacing:0.35px">localhost</div>
<div class="t" style="top:677.55px;font-size:14px;color:#262626;left:670px;letter-spacing:0.35px">Daemon</div>
<div class="t" style="top:677.55px;font-size:14px;color:#262626;left:751px;letter-spacing:0.7px">1998933</div>
<div class="t" style="top:677.55px;font-size:14px;color:#262626;left:826px;letter-spacing:0.35px">Waiting on empty queue</div>
<div class="t" style="top:706.55px;font-size:14px;color:#262626;left:292px;letter-spacing:0.7px">378296</div>
<div class="t" style="top:706.55px;font-size:14px;color:#262626;left:359px;letter-spacing:0.35px">root</div>
<div class="t" style="top:706.55px;font-size:14px;color:#262626;left:484px;letter-spacing:0.35px">localhost:56305</div>
<div class="t" style="top:706.55px;font-size:14px;color:#262626;left:670px;letter-spacing:0.35px">Sleep</div>
<div class="t" style="top:706.55px;font-size:14px;color:#262626;left:751px;letter-spacing:0.7px">2179</div>
<div class="t" style="top:735.55px;font-size:14px;color:#262626;left:292px;letter-spacing:0.7px">378297</div>
<div class="t" style="top:735.55px;font-size:14px;color:#262626;left:359px;letter-spacing:0.35px">root</div>
<div class="t" style="top:735.55px;font-size:14px;color:#262626;left:484px;letter-spacing:0.35px">localhost:56306</div>
<div class="t" style="top:735.55px;font-size:14px;color:#262626;left:670px;letter-spacing:0.35px">Sleep</div>
<div class="t" style="top:735.55px;font-size:14px;color:#262626;left:751px;letter-spacing:0.7px">2179</div>
<div class="t" style="top:764.55px;font-size:14px;color:#262626;left:292px;letter-spacing:0.7px">380187</div>
<div class="t" style="top:764.55px;font-size:14px;color:#262626;left:359px;letter-spacing:0.35px">root</div>
<div class="t" style="top:764.55px;font-size:14px;color:#262626;left:484px;letter-spacing:0.35px">localhost:62352</div>
<div class="t" style="top:764.55px;font-size:14px;color:#262626;left:606px;letter-spacing:0.35px">db1</div>
<div class="t" style="top:764.55px;font-size:14px;color:#262626;left:670px;letter-spacing:0.35px">Sleep</div>
<div class="t" style="top:764.55px;font-size:14px;color:#262626;left:751px;letter-spacing:0.7px">0</div>
<div class="t" style="top:793.55px;font-size:14px;color:#262626;left:292px;letter-spacing:0.7px">380188</div>
<div class="t" style="top:793.55px;font-size:14px;color:#262626;left:359px;letter-spacing:0.35px">root</div>
<div class="t" style="top:793.55px;font-size:14px;color:#262626;left:484px;letter-spacing:0.35px">localhost:62353</div>
<div class="t" style="top:793.55px;font-size:14px;color:#262626;left:606px;letter-spacing:0.35px">db1</div>
<div class="t" style="top:793.55px;font-size:14px;color:#262626;left:670px;letter-spacing:0.35px">Query</div>
<div class="t" style="top:793.55px;font-size:14px;color:#262626;left:751px;letter-spacing:0.7px">0</div>
<div class="t" style="top:793.55px;font-size:14px;color:#262626;left:826px;letter-spacing:0.35px">init</div>
<div class="t" style="top:793.55px;font-size:14px;color:#262626;left:1000px;letter-spacing:-0.35px">SHOW PROCESSLIST</div>
</body></html>
